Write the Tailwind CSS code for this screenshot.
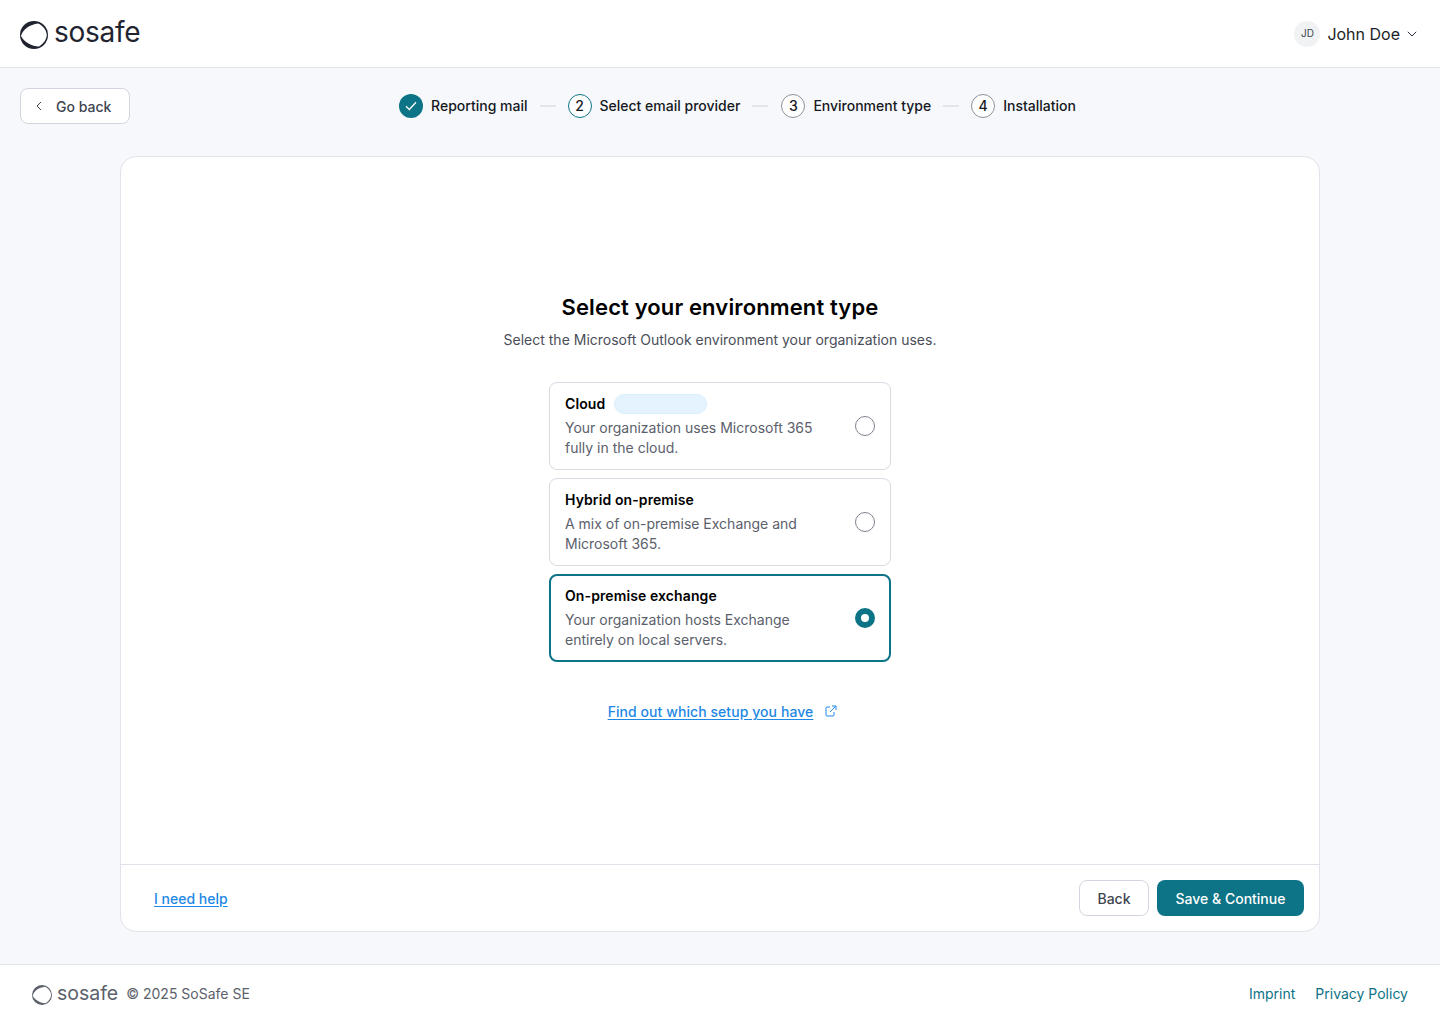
<!DOCTYPE html>
<html lang="en">
<head>
<meta charset="utf-8">
<script src="https://cdn.jsdelivr.net/npm/@tailwindcss/browser@4"></script>
</head>
<body class="font-['Inter',sans-serif] bg-[#f7f8fb]">
<div class="w-[1440px] h-[1024px] flex flex-col overflow-hidden">
  <header class="h-[68px] shrink-0 bg-white border-b border-[#e1e3ea] flex items-center justify-between pl-5 pr-[23px]">
    <div class="flex items-center gap-[6px]">
      <svg class="w-[28px] h-[28px] mt-[2px]" viewBox="0 0 28 28"><path fill="#1f2430" fill-rule="evenodd" d="M14 0a14 14 0 1 1 0 28a14 14 0 1 1 0-28ZM1 15C3 8 10 3.500 18 2.500C23 4.500 26.500 9 26.800 14C26.500 19 23 23 19 25.500C12 25.500 4 21 1 15Z"/></svg>
      <span class="text-[28px] leading-none text-[#1f2430] tracking-[-0.25px] -mt-[4px]">sosafe</span>
    </div>
    <div class="flex items-center">
      <span class="w-[26px] h-[26px] rounded-full bg-[#f1f2f4] flex items-center justify-center text-[10px] text-[#3d424d]">JD</span>
      <span class="ml-[7px] text-base text-[#1b1e25]">John Doe</span>
      <svg class="ml-[7px] w-[10px] h-[6px]" viewBox="0 0 10 6" fill="none" stroke="#2a2e37" stroke-width="1"><path d="M.8.8 5 5 9.200.8"/></svg>
    </div>
  </header>

  <main class="flex-1 flex flex-col">
    <div class="h-[88px] shrink-0 relative flex items-center justify-center pb-3">
      <button class="absolute left-5 top-5 w-[110px] h-9 bg-white border border-[#d3d6de] rounded-lg flex items-center pl-[14px] text-sm font-medium text-[#40444f]">
        <svg class="w-[8px] h-[10px]" viewBox="0 0 8 10" fill="none" stroke="#40444f" stroke-width="1"><path d="M6 1 2 5l4 4"/></svg>
        <span class="ml-[13px] mt-[1px]">Go back</span>
      </button>
      <ol class="flex items-center text-sm text-[#15181e] font-[450] ml-[35px]">
        <li class="flex items-center gap-2">
          <span class="w-6 h-6 rounded-full bg-[#0d7386] flex items-center justify-center">
            <svg class="w-3 h-[10px]" viewBox="0 0 12 10" fill="none" stroke="#fff" stroke-width="1.300"><path d="M1 5.300 4.300 8.500 11 1.300"/></svg>
          </span>
          Reporting mail
        </li>
        <li class="w-4 h-[2px] bg-[#e3e5ea] mx-[12px]"></li>
        <li class="flex items-center gap-2">
          <span class="w-6 h-6 rounded-full border border-[#0d7386] bg-white flex items-center justify-center">2</span>
          Select email provider
        </li>
        <li class="w-4 h-[2px] bg-[#e3e5ea] ml-[12px] mr-[13px]"></li>
        <li class="flex items-center gap-2">
          <span class="w-6 h-6 rounded-full border border-[#8d919b] bg-white flex items-center justify-center">3</span>
          Environment type
        </li>
        <li class="w-4 h-[2px] bg-[#e3e5ea] mx-[12px]"></li>
        <li class="flex items-center gap-2">
          <span class="w-6 h-6 rounded-full border border-[#8d919b] bg-white flex items-center justify-center">4</span>
          Installation
        </li>
      </ol>
    </div>

    <section class="w-[1200px] h-[776px] mx-auto bg-white border border-[#e1e3ea] rounded-2xl flex flex-col">
      <div class="flex-1 flex flex-col items-center pt-[135px]">
        <h1 class="text-[22px] leading-[30px] font-semibold text-black tracking-[0.13px]">Select your environment type</h1>
        <p class="mt-[8px] text-sm leading-5 text-[#4a4e59]">Select the Microsoft Outlook environment your organization uses.</p>

        <div class="mt-[32px] w-[342px] flex flex-col gap-2">
          <label class="h-[88px] bg-white border border-[#d8dbe2] rounded-lg flex items-center justify-between pl-[15px] pr-[15px]">
            <div class="w-[270px]">
              <div class="flex items-center h-5 gap-[9px] text-sm font-semibold text-black tracking-[0.1px]">Cloud <span class="w-[93px] h-5 rounded-full bg-[#e4f3fd] border border-[#d9eefc]"></span></div>
              <p class="mt-[4px] text-sm leading-5 text-[#5b606b]">Your organization uses Microsoft 365 fully in the cloud.</p>
            </div>
            <span class="w-5 h-5 rounded-full border border-[#7e838e] bg-white"></span>
          </label>
          <label class="h-[88px] bg-white border border-[#d8dbe2] rounded-lg flex items-center justify-between pl-[15px] pr-[15px]">
            <div class="w-[270px]">
              <div class="h-5 leading-5 text-sm font-semibold text-black tracking-[0.1px]">Hybrid on-premise</div>
              <p class="mt-[4px] text-sm leading-5 text-[#5b606b]">A mix of on-premise Exchange and Microsoft 365.</p>
            </div>
            <span class="w-5 h-5 rounded-full border border-[#7e838e] bg-white"></span>
          </label>
          <label class="h-[88px] bg-white border-2 border-[#0d7386] rounded-lg flex items-center justify-between pl-[14px] pr-[14px]">
            <div class="w-[270px]">
              <div class="h-5 leading-5 text-sm font-semibold text-black tracking-[0.1px]">On-premise exchange</div>
              <p class="mt-[4px] text-sm leading-5 text-[#5b606b]">Your organization hosts Exchange entirely on local servers.</p>
            </div>
            <span class="w-5 h-5 rounded-full border-[6px] border-[#0d7386] bg-white"></span>
          </label>
        </div>

        <a class="mt-[40px] ml-[5px] flex items-center text-sm leading-5 font-medium text-[#1e88e5] tracking-[0.07px]">
          <span class="underline underline-offset-2">Find out which setup you have</span>
          <svg class="ml-[12px] -mt-[2px] w-3 h-3" viewBox="0 0 12 12" fill="none" stroke="#1e88e5" stroke-width="1"><path d="M5 2H2a1 1 0 0 0-1 1v7a1 1 0 0 0 1 1h6a1 1 0 0 0 1-1V7M7 1h4v4M11 1 5 7"/></svg>
        </a>
      </div>
      <div class="h-[67px] shrink-0 border-t border-[#e1e3ea] flex items-center justify-between pl-[33px] pr-[15px]">
        <a class="mt-[1px] text-sm font-medium text-[#1e88e5] underline underline-offset-2">I need help</a>
        <div class="flex gap-2">
          <button class="w-[70px] h-9 pt-[1px] rounded-lg bg-white border border-[#d3d6de] text-sm font-medium text-[#40444f]">Back</button>
          <button class="w-[147px] h-9 pt-[1px] rounded-lg bg-[#0d7386] text-sm font-medium text-white">Save &amp; Continue</button>
        </div>
      </div>
    </section>
  </main>

  <footer class="h-[60px] shrink-0 bg-white border-t border-[#e1e3ea] flex items-center justify-between pl-8 pr-8">
    <div class="flex items-center">
      <svg class="w-5 h-5" viewBox="0 0 28 28"><path fill="#5b606b" fill-rule="evenodd" d="M14 0a14 14 0 1 1 0 28a14 14 0 1 1 0-28ZM1 15C3 8 10 3.500 18 2.500C23 4.500 26.500 9 26.800 14C26.500 19 23 23 19 25.500C12 25.500 4 21 1 15Z"/></svg>
      <span class="ml-[5px] text-[19.5px] leading-none text-[#5b606b] -mt-[2px]">sosafe</span>
      <span class="ml-[8px] text-sm text-[#5b606b] -mt-[1px]">© 2025 SoSafe SE</span>
    </div>
    <div class="flex gap-[20px] text-sm text-[#0d7386] -mt-[1px]">
      <a>Imprint</a>
      <a>Privacy Policy</a>
    </div>
  </footer>
</div>
</body>
</html>
